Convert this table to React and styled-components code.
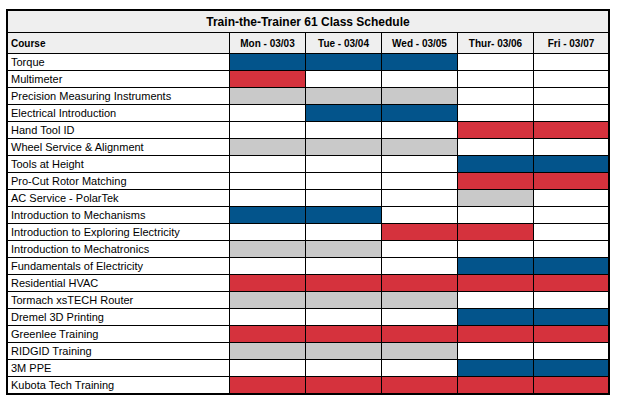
import React from 'react';
import styled, { createGlobalStyle } from 'styled-components';

const GlobalStyle = createGlobalStyle`
  body {
    margin: 0;
    background: #ffffff;
    font-family: "Liberation Sans", Arial, sans-serif;
    color: #000;
  }
`;

const Page = styled.div`
  padding: 9px 0 0 6px;
`;

const Sheet = styled.div`
  display: grid;
  grid-template-columns: 221px repeat(4, 75px) 74px;
  grid-template-rows: 21px 20px repeat(20, 16px);
  gap: 1px;
  width: 600px;
  background: #000;
  border: 2px solid #000;
`;

const Title = styled.div`
  grid-column: 1 / -1;
  display: flex;
  align-items: center;
  justify-content: center;
  background: #efefef;
  font-size: 12px;
  font-weight: 700;
`;

const Head = styled.div`
  display: flex;
  align-items: center;
  justify-content: ${(p) => (p.$left ? 'flex-start' : 'center')};
  padding-left: ${(p) => (p.$left ? '3px' : '0')};
  background: #efefef;
  font-size: 10px;
  font-weight: 700;
  white-space: nowrap;
`;

const CourseName = styled.div`
  display: flex;
  align-items: center;
  padding-left: 3px;
  background: #fff;
  font-size: 11px;
  white-space: nowrap;
`;

const SLOT_COLORS = {
  B: '#03548b',
  R: '#d5323d',
  G: '#c9c9c9',
  _: '#ffffff',
};

const Slot = styled.div`
  background: ${(p) => SLOT_COLORS[p.$kind]};
`;

const days = ['Mon - 03/03', 'Tue - 03/04', 'Wed - 03/05', 'Thur- 03/06', 'Fri - 03/07'];

const courses = [
  ['Torque', 'BBB__'],
  ['Multimeter', 'R____'],
  ['Precision Measuring Instruments', 'GGG__'],
  ['Electrical Introduction', '_BB__'],
  ['Hand Tool ID', '___RR'],
  ['Wheel Service & Alignment', 'GGG__'],
  ['Tools at Height', '___BB'],
  ['Pro-Cut Rotor Matching', '___RR'],
  ['AC Service - PolarTek', '___G_'],
  ['Introduction to Mechanisms', 'BB___'],
  ['Introduction to Exploring Electricity', '__RR_'],
  ['Introduction to Mechatronics', 'GG___'],
  ['Fundamentals of Electricity', '___BB'],
  ['Residential HVAC', 'RRRRR'],
  ['Tormach xsTECH Router', 'GGG__'],
  ['Dremel 3D Printing', '___BB'],
  ['Greenlee Training', 'RRRRR'],
  ['RIDGID Training', 'GGG__'],
  ['3M PPE', '___BB'],
  ['Kubota Tech Training', 'RRRRR'],
];

export default function App() {
  return (
    <>
      <GlobalStyle />
      <Page>
        <Sheet>
          <Title>Train-the-Trainer 61 Class Schedule</Title>
          <Head $left>Course</Head>
          {days.map((d) => (
            <Head key={d}>{d}</Head>
          ))}
          {courses.map(([name, slots]) => (
            <React.Fragment key={name}>
              <CourseName>{name}</CourseName>
              {slots.split('').map((k, i) => (
                <Slot key={i} $kind={k} />
              ))}
            </React.Fragment>
          ))}
        </Sheet>
      </Page>
    </>
  );
}
